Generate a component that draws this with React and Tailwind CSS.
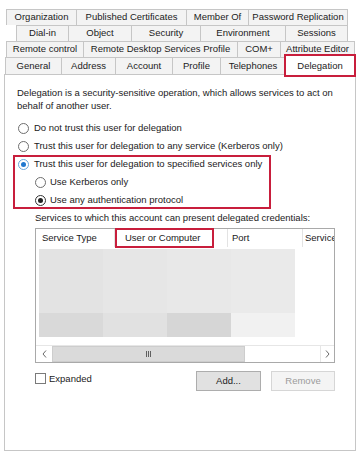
const font = "font-['Segoe_UI','Liberation_Sans',Arial,sans-serif]"

const rows = [
  {
    cls: 'ml-[6px] h-[16px]',
    tabs: [
      ['Organization', 'w-[70px]'],
      ['Published Certificates', 'w-[110px]'],
      ['Member Of', 'w-[62px]'],
      ['Password Replication', 'w-[100px]'],
    ],
  },
  {
    cls: 'ml-[16px] h-[16px]',
    tabs: [
      ['Dial-in', 'w-[52px]'],
      ['Object', 'w-[63px]'],
      ['Security', 'w-[69px]'],
      ['Environment', 'w-[85px]'],
      ['Sessions', 'w-[63px]'],
    ],
  },
  {
    cls: 'ml-[6px] h-[16px]',
    tabs: [
      ['Remote control', 'w-[77px]'],
      ['Remote Desktop Services Profile', 'w-[154px]'],
      ['COM+', 'w-[43px]'],
      ['Attribute Editor', 'w-[75px]'],
    ],
  },
]

function Tab({ label, w, last }) {
  return (
    <div
      className={`${w} ${last ? 'border-r' : ''} h-full flex items-center justify-center border-l border-t border-[#c6c6c6] bg-[#f3f3f3] whitespace-nowrap overflow-hidden`}
    >
      {label}
    </div>
  )
}

function Radio({ state }) {
  if (state === 'blue') {
    return (
      <span className="w-[11px] h-[11px] rounded-full border border-[#6aa7db] bg-white flex items-center justify-center shrink-0">
        <span className="w-[5px] h-[5px] rounded-full bg-[#1f78cf]" />
      </span>
    )
  }
  if (state === 'on') {
    return (
      <span className="w-[11px] h-[11px] rounded-full border border-[#333] bg-white flex items-center justify-center shrink-0">
        <span className="w-[5px] h-[5px] rounded-full bg-[#222]" />
      </span>
    )
  }
  return <span className="w-[11px] h-[11px] rounded-full border border-[#6e6e6e] bg-white shrink-0" />
}

function Chevron({ dir }) {
  return (
    <svg width="5" height="8" viewBox="0 0 5 8">
      <polyline
        points={dir === 'left' ? '4,0.5 1,4 4,7.5' : '1,0.5 4,4 1,7.5'}
        fill="none"
        stroke="#6a6a6a"
        strokeWidth="1"
      />
    </svg>
  )
}

export default function App() {
  const upper = ['bg-[#e3e3e3]', 'bg-[#e6e6e6]', 'bg-[#e8e8e8]', 'bg-[#eaeaea]']
  const lower = ['bg-[#d9d9d9]', 'bg-[#e1e1e1]', 'bg-[#d6d6d6]', 'bg-[#f1f1f1]']

  return (
    <div className={`w-[360px] h-[453px] bg-white overflow-hidden text-[9.5px] text-[#1b1b1b] ${font}`}>
      <div className="pt-[9px]">
        {rows.map((r, i) => (
          <div key={i} className={`flex ${r.cls}`}>
            {r.tabs.map(([label, w], j) => (
              <Tab key={label} label={label} w={w} last={j === r.tabs.length - 1} />
            ))}
          </div>
        ))}

        {/* row with the selected tab */}
        <div className="flex items-start ml-[5px] h-[17px]">
          <Tab label="General" w="w-[56px]" />
          <Tab label="Address" w="w-[54px]" />
          <Tab label="Account" w="w-[57px]" />
          <Tab label="Profile" w="w-[48px]" />
          <Tab label="Telephones" w="w-[65px]" />
          <div className="relative z-10 -mt-[2px] w-[70px] h-[21px] flex items-center justify-center bg-white border-l border-t border-r border-[#c6c6c6]">
            Delegation
            <span className="absolute -left-[2px] -right-[2px] -top-[2px] -bottom-[1px] border-2 border-[#c81e3c]" />
          </div>
        </div>
      </div>

      {/* property page */}
      <div className="ml-[4px] w-[352px] h-[377px] border border-[#c6c6c6] bg-white">
        <p className="pl-[12px] pt-[12px] leading-[12.5px] whitespace-nowrap">
          Delegation is a security-sensitive operation, which allows services to act on
          <br />
          behalf of another user.
        </p>

        <div className="mt-[7px]">
          <label className="ml-[8px] pl-[5px] h-[18px] flex items-center gap-[5px]">
            <Radio />
            <span>Do not trust this user for delegation</span>
          </label>
          <label className="ml-[8px] pl-[5px] h-[18px] flex items-center gap-[5px]">
            <Radio />
            <span>Trust this user for delegation to any service (Kerberos only)</span>
          </label>
          <div className="ml-[8px] w-[258px] ring-2 ring-inset ring-[#c81e3c]">
            <label className="pl-[5px] h-[18px] flex items-center gap-[5px]">
              <Radio state="blue" />
              <span>Trust this user for delegation to specified services only</span>
            </label>
            <label className="pl-[22px] h-[18px] flex items-center gap-[4px]">
              <Radio />
              <span>Use Kerberos only</span>
            </label>
            <label className="pl-[22px] h-[18px] flex items-center gap-[4px]">
              <Radio state="on" />
              <span>Use any authentication protocol</span>
            </label>
          </div>
        </div>

        <p className="ml-[30px] mt-[3px] leading-[12px]">
          Services to which this account can present delegated credentials:
        </p>

        {/* list view */}
        <div className="ml-[30px] mt-[4px] w-[300px] h-[135px] border border-[#a9a9a9] flex flex-col">
          <div className="h-[18px] flex items-center shrink-0 whitespace-nowrap">
            <div className="w-[79px] h-full flex items-center pl-[6px] border-r border-[#e3e3e3]">Service Type</div>
            <div className="relative w-[113px] h-full flex items-center pl-[10px] border-r border-[#e3e3e3]">
              User or Computer
              <span className="absolute left-0 -top-[1px] w-[99px] h-[20px] border-2 border-[#c81e3c]" />
            </div>
            <div className="w-[75px] h-full flex items-center pl-[4px] border-r border-[#e3e3e3]">Port</div>
            <div className="flex-1 h-full flex items-center pl-[2px] overflow-hidden">Service</div>
          </div>

          <div className="flex-1 pl-[3px] pt-[2px]">
            <div className="grid grid-cols-4 w-[256px]">
              {upper.map((c, i) => (
                <div key={'u' + i} className={`h-[64px] ${c}`} />
              ))}
              {lower.map((c, i) => (
                <div key={'l' + i} className={`h-[24px] ${c}`} />
              ))}
            </div>
          </div>

          <div className="h-[17px] flex shrink-0 border-t border-[#e6e6e6]">
            <div className="w-[16px] flex items-center justify-center bg-white">
              <Chevron dir="left" />
            </div>
            <div className="w-[193px] bg-[#dadada] border border-[#cdcdcd] flex items-center justify-center">
              <div className="flex gap-[1px]">
                <span className="w-[1px] h-[6px] bg-[#606060]" />
                <span className="w-[1px] h-[6px] bg-[#606060]" />
                <span className="w-[1px] h-[6px] bg-[#606060]" />
              </div>
            </div>
            <div className="flex-1 bg-white" />
            <div className="w-[14px] flex items-center justify-center bg-white border-l border-[#e6e6e6]">
              <Chevron dir="right" />
            </div>
          </div>
        </div>

        <div className="ml-[30px] mt-[8px] w-[300px] flex items-start">
          <span className="mt-[2px] w-[11px] h-[11px] border border-[#7a7a7a] bg-white shrink-0" />
          <span className="ml-[3px] mt-[1px] leading-[13px]">Expanded</span>
          <button className="ml-auto w-[65px] h-[20px] bg-[#e1e1e1] border border-[#adadad] leading-none">
            Add...
          </button>
          <button className="ml-[10px] w-[64px] h-[20px] bg-[#f4f4f4] border border-[#d6d6d6] text-[#9b9b9b] leading-none">
            Remove
          </button>
        </div>
      </div>
    </div>
  )
}
